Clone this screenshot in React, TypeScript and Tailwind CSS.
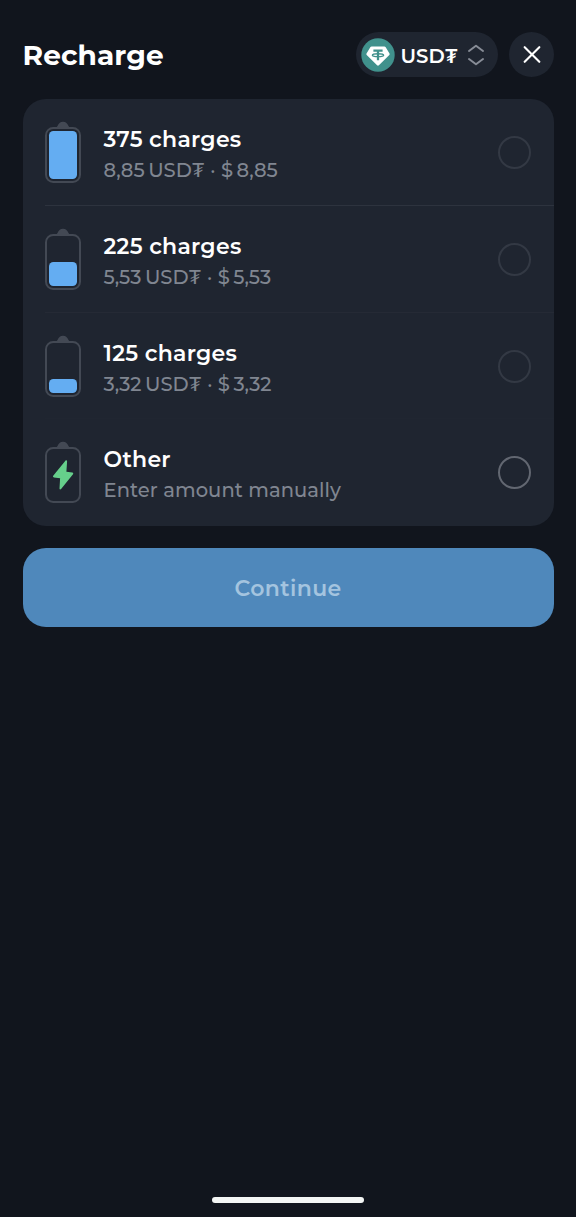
type BatteryProps = { level?: number; bolt?: boolean };

function Battery({ level = 0, bolt = false }: BatteryProps) {
  return (
    <svg className="block h-[63px] w-9 shrink-0" viewBox="0 0 36 63" fill="none">
      <path d="M11 6.5C12.2 6 12.6 4.9 13.3 3.6C14.2 1.8 15.6.7 18 .7C20.4.7 21.8 1.8 22.7 3.6C23.4 4.9 23.8 6 25 6.5Z" fill="#434954" />
      <rect x="1" y="7" width="34" height="54" rx="7.2" stroke="#434954" strokeWidth="2" />
      {level > 0 && <rect x="4" y={58 - level} width="28" height={level} rx="4.4" fill="#64adf2" />}
      {bolt && (
        <path d="M20.4 19.8L8.2 34.8C7.7 35.5 8 36.2 8.9 36.4L15.1 37.3L14.5 47.4C14.5 48.5 15.4 48.8 16.1 48L28 33.2C28.5 32.5 28.2 31.8 27.3 31.6L21.4 30.7L22.1 20.4C22.1 19.3 21.1 19 20.4 19.8Z" fill="#66cf8b" />
      )}
    </svg>
  );
}

function TetherIcon() {
  return (
    <svg className="block size-[34px] shrink-0" viewBox="0 0 34 34">
      <circle cx="17" cy="17" r="16.7" fill="#40918c" />
      <path d="M10.7 8.4H23.3C24 8.4 24.4 8.7 24.7 9.2L28.5 15.6C28.8 16.1 28.7 16.5 28.3 16.9L17.9 27.2C17.3 27.8 16.7 27.8 16.1 27.2L5.7 16.9C5.3 16.5 5.2 16.1 5.5 15.6L9.3 9.2C9.6 8.7 10 8.4 10.7 8.4Z" fill="#fff" />
      <path d="M12.4 12.6H21.6M17 12.6V22.2" stroke="#40918c" strokeWidth="2.3" fill="none" />
      <ellipse cx="17" cy="17.2" rx="5.6" ry="1.4" stroke="#40918c" strokeWidth="1.4" fill="none" />
    </svg>
  );
}

type Plan = { title: string; amount?: string; note?: string; level?: number; line?: string };

const plans: Plan[] = [
  { title: "375 charges", amount: "8,85", level: 48, line: "border-[#2d333e]" },
  { title: "225 charges", amount: "5,53", level: 24, line: "border-[#252a35]" },
  { title: "125 charges", amount: "3,32", level: 14, line: "border-[#202631]" },
  { title: "Other", note: "Enter amount manually" },
];

function PlanRow({ title, amount, note, level, line }: Plan) {
  return (
    <li className="flex pl-[22px]">
      <div className="pt-[22px]">
        <Battery level={level} bolt={!level} />
      </div>
      <div className={`ml-[-36px] flex flex-1 items-start pr-[23px] pl-[59px] ${line ? `border-b ${line}` : ""}`}>
        <div className="flex-1 pt-[25px] whitespace-nowrap">
          <p className="text-[22px] leading-[31px] font-semibold tracking-[0.28px] text-white">{title}</p>
          {amount ? (
            <p className="flex text-[19.5px] leading-[31px] font-medium text-[#808691]">
              <span>{amount}</span>
              <span className="ml-[3.5px]">USD₮</span>
              <span className="w-4 text-center">·</span>
              <span>$</span>
              <span className="ml-[3.5px]">{amount}</span>
            </p>
          ) : (
            <p className="text-[19.5px] leading-[31px] font-medium tracking-[0.08px] text-[#808691]">{note}</p>
          )}
        </div>
        <span className={`mt-[37px] size-[33px] rounded-full border-2 ${amount ? "border-[#333944]" : "border-[#626771]"}`} />
      </div>
    </li>
  );
}

export default function App() {
  return (
    <main className="flex h-[1217px] w-[576px] flex-col bg-[#11151d] px-[22.5px] pt-8 font-['Montserrat','Inter','Noto_Sans',sans-serif]">
      <header className="flex h-[45px] items-center">
        <h1 className="flex-1 pt-px text-[28px] leading-9 font-bold tracking-[0.1px] text-white">Recharge</h1>
        <button className="flex h-[45px] w-[142px] items-center rounded-full bg-[#1f2530] pl-[5.5px]">
          <TetherIcon />
          <span className="ml-[5.5px] w-[58px] pt-0.5 text-left text-[19.7px] leading-7 font-semibold whitespace-nowrap text-white">USD₮</span>
          <svg className="ml-2 block h-6 w-[18px] shrink-0" viewBox="0 0 18 24" fill="none" stroke="#878c96" strokeWidth="2" strokeLinecap="round" strokeLinejoin="round">
            <path d="M2 8L9 2.7L16 8M2 16L9 21.3L16 16" />
          </svg>
        </button>
        <button aria-label="Close" className="ml-[11px] flex size-[45px] items-center justify-center rounded-full bg-[#1f2530]">
          <svg className="ml-px block size-[18px]" viewBox="0 0 18 18" stroke="#fff" strokeWidth="2.1" strokeLinecap="round">
            <path d="M1.7 1.2L16.3 15.8M16.3 1.2L1.7 15.8" />
          </svg>
        </button>
      </header>
      <ul className="mt-[22px] grid h-[427px] grid-rows-[107px_107px_106px_107px] overflow-hidden rounded-[23px] bg-[#1f2530]">
        {plans.map((plan) => (
          <PlanRow key={plan.title} {...plan} />
        ))}
      </ul>
      <button className="mt-[22px] flex h-[79px] shrink-0 items-center justify-center rounded-[23px] bg-[#4f88bb] pt-0.5 text-[22px] font-semibold tracking-[0.4px] text-[#a4c4df]">
        Continue
      </button>
      <div className="mt-auto mb-[14px] h-[6px] w-[152px] self-center rounded-full bg-[#f3f5f4]" />
    </main>
  );
}
